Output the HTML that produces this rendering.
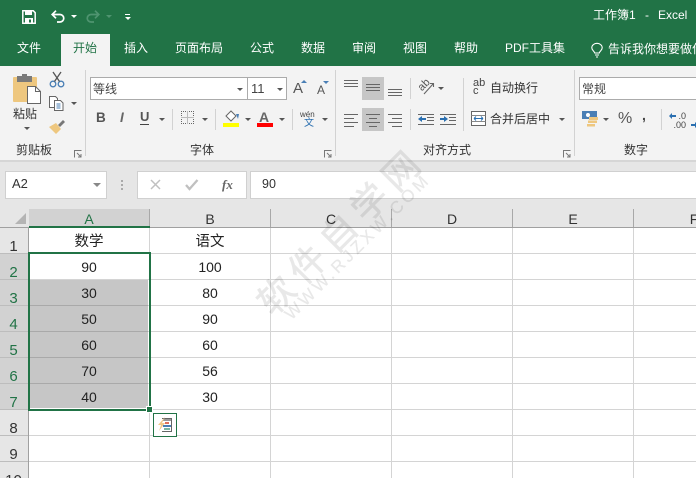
<!DOCTYPE html>
<html><head><meta charset="utf-8"><style>
*{box-sizing:border-box}
html,body{margin:0;padding:0;width:696px;height:478px;overflow:hidden}
body{position:relative;background:#fff;font-family:"Liberation Sans","Noto Sans CJK SC",sans-serif;font-size:12px;color:#222}
#r{position:absolute;left:0;top:0;width:696px;height:478px;overflow:hidden;background:#fff}
.a{position:absolute;white-space:nowrap}
.tab{position:absolute;top:39px;color:#fff;font-size:12px;line-height:18px;white-space:nowrap}
.lbl{position:absolute;top:141px;font-size:12px;line-height:18px;color:#333;white-space:nowrap}
.sep{position:absolute;background:#d2d2d2;width:1px}
.tri{position:absolute;width:0;height:0;border-left:3px solid transparent;border-right:3px solid transparent;border-top:3px solid #555}
.hl{position:absolute;left:29px;width:667px;height:1px;background:#d4d4d4}
.vl{position:absolute;top:228px;width:1px;height:250px;background:#d4d4d4}
.rh{position:absolute;left:0;width:27px;text-align:center;font-size:15px;line-height:18px;color:#333}
.ch{position:absolute;top:209px;height:18px;text-align:center;font-size:14px;line-height:20px;color:#333;border-right:1px solid #a8a8a8}
.c{position:absolute;width:120px;text-align:center;font-size:14px;line-height:18px;color:#222}
.z{font-size:14.5px}
.g{background:#c6c6c6}
.ic{position:absolute;overflow:visible}
</style></head><body><div id="r">
<!-- title bar -->
<div class="a" style="left:0;top:0;width:696px;height:66px;background:#217346"></div>
<svg class="ic" style="left:22px;top:10px" width="14" height="14" viewBox="0 0 14 14"><path d="M.8.8h10.500l1.900 1.900v10.500H.8z" fill="none" stroke="#fff" stroke-width="1.500"/><rect x="3" y="1" width="7" height="4" fill="#fff"/><rect x="3" y="8" width="8" height="5" fill="#fff"/><rect x="7" y="9.500" width="2" height="3" fill="#217346"/></svg>
<svg class="ic" style="left:51px;top:10px" width="14" height="13" viewBox="0 0 14 13"><path d="M5 .7L1.200 4.500 5 8.300M1.500 4.500h7.500a3.600 3.600 0 0 1 0 7.500H6" fill="none" stroke="#fff" stroke-width="1.700"/></svg>
<div class="tri" style="left:71px;top:15px;border-top-color:#fff"></div>
<svg class="ic" style="left:86px;top:10px" width="14" height="13" viewBox="0 0 14 13"><path d="M9 .7l3.800 3.800L9 8.300M12.500 4.500H5a3.600 3.600 0 0 0 0 7.500h3" fill="none" stroke="#4f9470" stroke-width="1.700"/></svg>
<div class="tri" style="left:106px;top:15px;border-top-color:#4f9470"></div>
<div class="a" style="left:125px;top:14px;width:5px;height:1px;background:#fff"></div>
<div class="tri" style="left:125px;top:17px;border-top-color:#fff"></div>
<div class="a" style="left:593px;top:6px;color:#fff;font-size:12px;line-height:18px">工作簿1</div>
<div class="a" style="left:645px;top:6px;color:#fff;font-size:12px;line-height:18px">-</div>
<div class="a" style="left:658px;top:6px;color:#fff;font-size:12px;line-height:18px">Excel</div>
<!-- tabs -->
<div class="a" style="left:61px;top:34px;width:49px;height:32px;background:#f3f3f3"></div>
<div class="tab" style="left:17px">文件</div>
<div class="tab" style="left:73px;color:#217346">开始</div>
<div class="tab" style="left:124px">插入</div>
<div class="tab" style="left:175px">页面布局</div>
<div class="tab" style="left:250px">公式</div>
<div class="tab" style="left:301px">数据</div>
<div class="tab" style="left:352px">审阅</div>
<div class="tab" style="left:403px">视图</div>
<div class="tab" style="left:454px">帮助</div>
<div class="tab" style="left:505px">PDF工具集</div>
<svg class="ic" style="left:591px;top:43px" width="12" height="15" viewBox="0 0 12 15"><path d="M3.700 10C3.300 8 .8 7.300.8 4.800a5.200 4.500 0 0 1 10.400 0C11.200 7.300 8.700 8 8.300 10zM4 12h4M5 14h2" fill="none" stroke="#fff" stroke-width="1.100"/></svg>
<div class="tab" style="left:608px;top:40px">告诉我你想要做什么</div>
<!-- ribbon -->
<div class="a" style="left:0;top:66px;width:696px;height:95px;background:#f3f3f3"></div>
<div class="a" style="left:0;top:160px;width:696px;height:2px;background:#d6d6d6"></div>
<div class="a" style="left:0;top:162px;width:696px;height:47px;background:#e6e6e6"></div>
<div class="sep" style="left:85px;top:70px;height:86px"></div>
<div class="sep" style="left:335px;top:70px;height:86px"></div>
<div class="sep" style="left:574px;top:70px;height:86px"></div>
<!-- clipboard -->
<svg class="ic" style="left:13px;top:74px" width="29" height="31" viewBox="0 0 29 31"><rect x="0" y="3" width="24" height="25" rx="1" fill="#eec77f"/><rect x="4" y="2" width="15" height="6" fill="#7a7a7a"/><rect x="9" y="0" width="5" height="3" fill="#7a7a7a"/><path d="M14.500 12.500h8l5 5v12h-13z" fill="#fff" stroke="#666"/><path d="M22.500 12.500v5h5" fill="none" stroke="#666"/></svg>
<svg class="ic" style="left:49px;top:71px" width="16" height="17" viewBox="0 0 16 17"><circle cx="4" cy="13" r="2.800" fill="none" stroke="#4a7fb5" stroke-width="1.300"/><circle cx="12" cy="13" r="2.800" fill="none" stroke="#4a7fb5" stroke-width="1.300"/><path d="M5.500 10.500L12 1M10.500 10.500L4 1" stroke="#555" stroke-width="1.300"/></svg>
<svg class="ic" style="left:49px;top:96px" width="15" height="15" viewBox="0 0 15 15"><path d="M.5.5h6l2 2v9H.500z" fill="#fff" stroke="#666"/><path d="M5.500 4.500h6l2.500 2.500v7.500H5.500z" fill="#fff" stroke="#666"/><path d="M7.500 8h4M7.500 10h4M7.500 12h4" stroke="#4a7fb5"/></svg>
<div class="tri" style="left:71px;top:102px"></div>
<svg class="ic" style="left:49px;top:119px" width="17" height="15" viewBox="0 0 17 15"><path d="M0 8l7-4 5 6-5 5z" fill="#eec77f"/><path d="M9 6l5-5 2 2-5 5z" fill="#777"/></svg>
<div class="a" style="left:13px;top:105px;font-size:12px;line-height:18px;color:#333">粘贴</div>
<div class="tri" style="left:24px;top:127px"></div>
<div class="lbl" style="left:16px">剪贴板</div>
<div class="lbl" style="left:190px">字体</div>
<div class="lbl" style="left:423px">对齐方式</div>
<div class="lbl" style="left:624px">数字</div>
<svg class="ic" style="left:74px;top:150px" width="8" height="8"><path d="M.5 7.500v-7h7M3 3l4 4M7 4v3H4" fill="none" stroke="#777"/></svg>
<svg class="ic" style="left:324px;top:150px" width="8" height="8"><path d="M.5 7.500v-7h7M3 3l4 4M7 4v3H4" fill="none" stroke="#777"/></svg>
<svg class="ic" style="left:563px;top:150px" width="8" height="8"><path d="M.5 7.500v-7h7M3 3l4 4M7 4v3H4" fill="none" stroke="#777"/></svg>
<!-- font -->
<div class="a" style="left:90px;top:77px;width:197px;height:23px;background:#fff;border:1px solid #ababab"></div>
<div class="a" style="left:247px;top:77px;width:1px;height:23px;background:#ababab"></div>
<div class="a" style="left:93px;top:80px;line-height:18px;color:#444">等线</div>
<div class="tri" style="left:237px;top:88px"></div>
<div class="a" style="left:251px;top:80px;font-size:13px;line-height:18px;color:#444">11</div>
<div class="tri" style="left:277px;top:88px"></div>
<div class="a" style="left:293px;top:80px;font-size:15px;line-height:18px;color:#555">A</div>
<div class="tri" style="left:301px;top:80px;border-top:0;border-bottom:3px solid #4a7fb5"></div>
<div class="a" style="left:317px;top:82px;font-size:12px;line-height:16px;color:#555">A</div>
<div class="tri" style="left:323px;top:81px;border-top-color:#4a7fb5"></div>
<div class="a" style="left:96px;top:109px;font-size:13.500px;font-weight:bold;line-height:18px;color:#555">B</div>
<div class="a" style="left:120px;top:109px;font-style:italic;font-size:13.500px;font-weight:bold;line-height:18px;color:#666">I</div>
<div class="a" style="left:140px;top:109px;font-size:13px;font-weight:bold;line-height:16px;color:#555">U</div>
<div class="a" style="left:140px;top:124px;width:9px;height:1px;background:#444"></div>
<div class="tri" style="left:159px;top:118px"></div>
<div class="sep" style="left:172px;top:109px;height:21px"></div>
<div class="a" style="left:181px;top:111px;width:13px;height:13px;border:1px dotted #666"></div>
<div class="a" style="left:187px;top:111px;width:1px;height:13px;background:#bbb"></div>
<div class="a" style="left:181px;top:117px;width:13px;height:1px;background:#bbb"></div>
<div class="tri" style="left:202px;top:118px"></div>
<div class="sep" style="left:215px;top:109px;height:21px"></div>
<svg class="ic" style="left:225px;top:110px" width="15" height="13" viewBox="0 0 15 13"><path d="M1 6l5-5 5 5-5 5z" fill="#fff" stroke="#666"/><path d="M11 4h3l-1 5z" fill="#4a7fb5"/></svg>
<div class="a" style="left:223px;top:123px;width:16px;height:4px;background:#ff0"></div>
<div class="tri" style="left:245px;top:118px"></div>
<div class="a" style="left:259px;top:110px;font-size:14px;font-weight:bold;line-height:15px;color:#666">A</div>
<div class="a" style="left:257px;top:123px;width:16px;height:4px;background:#f00"></div>
<div class="tri" style="left:279px;top:118px"></div>
<div class="sep" style="left:292px;top:109px;height:21px"></div>
<div class="a" style="left:300px;top:110px;font-size:8px;line-height:10px;color:#444">wén</div>
<div class="a" style="left:304px;top:118px;font-size:10px;line-height:11px;color:#2a6fb0">文</div>
<div class="tri" style="left:322px;top:118px"></div>
<!-- align -->
<div class="a" style="left:362px;top:77px;width:22px;height:23px;background:#c6c6c6"></div>
<div class="a" style="left:362px;top:108px;width:22px;height:23px;background:#c6c6c6"></div>
<svg class="ic" style="left:340px;top:76px" width="70" height="60" viewBox="0 0 70 60" stroke="#666" fill="none"><path d="M4 4.500h14M4 7.500h14M4 10.500h14M26 8.500h14M26 11.500h14M26 14.500h14M48 13.500h14M48 16.500h14M48 19.500h14"/><path d="M4 38.500h14M4 42.500h10M4 46.500h14M4 50.500h10M26 38.500h14M29 42.500h8M26 46.500h14M29 50.500h8M48 38.500h14M52 42.500h10M48 46.500h14M52 50.500h10"/></svg>
<div class="sep" style="left:410px;top:78px;height:21px"></div>
<div class="sep" style="left:410px;top:109px;height:21px"></div>
<div class="a" style="left:418px;top:79px;font-size:11px;line-height:12px;color:#555;transform:rotate(-45deg)">ab</div>
<svg class="ic" style="left:418px;top:80px" width="17" height="15" viewBox="0 0 17 15"><path d="M6 14L15 4M12 3.500h3.500v3.500" fill="none" stroke="#666" stroke-width="1.100"/></svg>
<div class="tri" style="left:438px;top:87px"></div>
<svg class="ic" style="left:418px;top:114px" width="40" height="12" viewBox="0 0 40 12"><path d="M0 .5h16M9 3.500h7M9 6.500h7M0 10.500h16M22 .5h16M31 3.500h7M31 6.500h7M22 10.500h16" stroke="#666" fill="none"/><path d="M0 5l4-3v2h4v2H4v2zM30 5l-4-3v2h-4v2h4v2z" fill="#2a6fb0"/></svg>
<div class="sep" style="left:463px;top:78px;height:53px"></div>
<div class="a" style="left:473px;top:79px;font-size:11px;line-height:8px;color:#444;white-space:normal;width:14px">ab<br>c</div>
<div class="a" style="left:490px;top:79px;line-height:18px;color:#333">自动换行</div>
<svg class="ic" style="left:471px;top:111px" width="15" height="15" viewBox="0 0 15 15"><rect x=".5" y=".5" width="14" height="14" fill="#fff" stroke="#666"/><path d="M.5 4.500h14M.5 10.500h14" stroke="#888"/><path d="M3 7.500h9M3 7.500l2-2M3 7.500l2 2M12 7.500l-2-2M12 7.500l-2 2" stroke="#2a6fb0" fill="none"/></svg>
<div class="a" style="left:490px;top:110px;line-height:18px;color:#333">合并后居中</div>
<div class="tri" style="left:559px;top:118px"></div>
<!-- number -->
<div class="a" style="left:579px;top:77px;width:130px;height:23px;background:#fff;border:1px solid #ababab"></div>
<div class="a" style="left:582px;top:80px;line-height:18px;color:#444">常规</div>
<svg class="ic" style="left:582px;top:111px" width="17" height="16" viewBox="0 0 17 16"><rect x="0" y="0" width="15" height="8" fill="#4a7fb5"/><circle cx="6" cy="4" r="2" fill="#fff"/><rect x="7" y="6" width="9" height="3" fill="#eec77f"/><rect x="6" y="9.500" width="9" height="2.500" fill="#eec77f"/><rect x="5" y="13" width="8" height="2.500" fill="#eec77f"/></svg>
<div class="tri" style="left:603px;top:118px"></div>
<div class="a" style="left:618px;top:110px;font-size:16px;line-height:18px;color:#555">%</div>
<div class="a" style="left:642px;top:106px;font-size:14px;font-weight:bold;line-height:18px;color:#444">,</div>
<div class="sep" style="left:661px;top:109px;height:21px"></div>
<div class="a" style="left:671px;top:112px;font-size:9px;line-height:9px;color:#444;text-align:right;width:15px;white-space:normal">.0<br>.00</div>
<svg class="ic" style="left:669px;top:113px" width="7" height="6"><path d="M0 3l3-3v2h4v2H3v2z" fill="#2a6fb0"/></svg>
<svg class="ic" style="left:691px;top:122px" width="7" height="6"><path d="M0 2h4V0l3 3-3 3V4H0z" fill="#2a6fb0"/></svg>
<!-- formula bar -->
<div class="a" style="left:5px;top:171px;width:102px;height:28px;background:#fff;border:1px solid #d0d0d0"></div>
<div class="a" style="left:12px;top:175px;font-size:13px;line-height:18px;color:#333">A2</div>
<div class="tri" style="left:93px;top:183px;border-left-width:4px;border-right-width:4px;border-top:4px solid #888"></div>
<div class="a" style="left:121px;top:180px;width:2px;height:2px;background:#aaa"></div>
<div class="a" style="left:121px;top:184px;width:2px;height:2px;background:#aaa"></div>
<div class="a" style="left:121px;top:188px;width:2px;height:2px;background:#aaa"></div>
<div class="a" style="left:137px;top:171px;width:110px;height:28px;background:#fff;border:1px solid #d0d0d0"></div>
<svg class="ic" style="left:150px;top:179px" width="50" height="12" viewBox="0 0 50 12"><path d="M1 1l9 9M10 1l-9 9" stroke="#c0c0c0" stroke-width="1.500" fill="none"/><path d="M36 6l3.500 4 8-9" stroke="#c0c0c0" stroke-width="2.300" fill="none"/></svg>
<div class="a" style="left:222px;top:176px;font-family:'Liberation Serif',serif;font-style:italic;font-weight:bold;font-size:13px;line-height:18px;color:#666">fx</div>
<div class="a" style="left:250px;top:171px;width:446px;height:28px;background:#fff;border:1px solid #d0d0d0;border-right:0"></div>
<div class="a" style="left:262px;top:175px;font-size:12.500px;line-height:18px;color:#333">90</div>
<!-- grid headers -->
<div class="a" style="left:0;top:209px;width:696px;height:18px;background:#e6e6e6"></div>
<div class="a" style="left:0;top:227px;width:28px;height:251px;background:#e6e6e6"></div>
<div class="a" style="left:15px;top:213px;width:0;height:0;border-left:11px solid transparent;border-bottom:11px solid #b4b4b4"></div>
<div class="ch" style="left:29px;width:121px;background:#d2d2d2;color:#217346">A</div>
<div class="ch" style="left:150px;width:121px">B</div>
<div class="ch" style="left:271px;width:121px">C</div>
<div class="ch" style="left:392px;width:121px">D</div>
<div class="ch" style="left:513px;width:121px">E</div>
<div class="ch" style="left:634px;width:121px">F</div>
<div class="a" style="left:0;top:227px;width:696px;height:1px;background:#a0a0a0"></div>
<div class="a" style="left:29px;top:226px;width:121px;height:2px;background:#217346"></div>
<div class="a" style="left:28px;top:228px;width:1px;height:250px;background:#a0a0a0"></div>
<div class="a" style="left:0;top:254px;width:28px;height:156px;background:#d2d2d2"></div>
<!-- row header numbers -->
<div class="rh" style="top:238px">1</div>
<div class="rh" style="top:264px;color:#217346">2</div>
<div class="rh" style="top:290px;color:#217346">3</div>
<div class="rh" style="top:316px;color:#217346">4</div>
<div class="rh" style="top:342px;color:#217346">5</div>
<div class="rh" style="top:368px;color:#217346">6</div>
<div class="rh" style="top:394px;color:#217346">7</div>
<div class="rh" style="top:420px">8</div>
<div class="rh" style="top:446px">9</div>
<div class="rh" style="top:472px">10</div>
<div class="a" style="left:0;top:253px;width:28px;height:1px;background:#bdbdbd"></div>
<div class="a" style="left:0;top:279px;width:28px;height:1px;background:#bdbdbd"></div>
<div class="a" style="left:0;top:305px;width:28px;height:1px;background:#bdbdbd"></div>
<div class="a" style="left:0;top:331px;width:28px;height:1px;background:#bdbdbd"></div>
<div class="a" style="left:0;top:357px;width:28px;height:1px;background:#bdbdbd"></div>
<div class="a" style="left:0;top:383px;width:28px;height:1px;background:#bdbdbd"></div>
<div class="a" style="left:0;top:409px;width:28px;height:1px;background:#bdbdbd"></div>
<div class="a" style="left:0;top:435px;width:28px;height:1px;background:#bdbdbd"></div>
<div class="a" style="left:0;top:461px;width:28px;height:1px;background:#bdbdbd"></div>
<!-- grid lines -->
<div class="hl" style="top:253px"></div><div class="hl" style="top:279px"></div><div class="hl" style="top:305px"></div><div class="hl" style="top:331px"></div><div class="hl" style="top:357px"></div><div class="hl" style="top:383px"></div><div class="hl" style="top:409px"></div><div class="hl" style="top:435px"></div><div class="hl" style="top:461px"></div>
<div class="vl" style="left:149px"></div><div class="vl" style="left:270px"></div><div class="vl" style="left:391px"></div><div class="vl" style="left:512px"></div><div class="vl" style="left:633px"></div>
<!-- selection fill -->
<div class="a g" style="left:30px;top:280px;width:118px;height:128px"></div>
<div class="a" style="left:30px;top:305px;width:118px;height:1px;background:#a9a9a9"></div>
<div class="a" style="left:30px;top:331px;width:118px;height:1px;background:#a9a9a9"></div>
<div class="a" style="left:30px;top:357px;width:118px;height:1px;background:#a9a9a9"></div>
<div class="a" style="left:30px;top:383px;width:118px;height:1px;background:#a9a9a9"></div>
<!-- cells -->
<div class="c z" style="left:29px;top:233px">数学</div><div class="c z" style="left:150px;top:233px">语文</div>
<div class="c" style="left:29px;top:258px">90</div><div class="c" style="left:150px;top:258px">100</div>
<div class="c" style="left:29px;top:284px">30</div><div class="c" style="left:150px;top:284px">80</div>
<div class="c" style="left:29px;top:310px">50</div><div class="c" style="left:150px;top:310px">90</div>
<div class="c" style="left:29px;top:336px">60</div><div class="c" style="left:150px;top:336px">60</div>
<div class="c" style="left:29px;top:362px">70</div><div class="c" style="left:150px;top:362px">56</div>
<div class="c" style="left:29px;top:388px">40</div><div class="c" style="left:150px;top:388px">30</div>
<!-- selection border -->
<div class="a" style="left:28px;top:252px;width:123px;height:159px;border:2px solid #217346"></div>
<div class="a" style="left:146px;top:406px;width:7px;height:7px;background:#217346;border:1px solid #fff"></div>
<!-- quick analysis -->
<div class="a" style="left:153px;top:413px;width:24px;height:24px;background:#fff;border:1px solid #217346"></div>
<svg class="ic" style="left:157px;top:417px" width="16" height="16" viewBox="0 0 16 16"><path d="M5 1.500h9.500v13H5" fill="#fff" stroke="#666"/><rect x="6" y="2" width="8" height="2" fill="#999"/><path d="M8 0L1 8h3L2 14l6-8H5z" fill="#f0c98a"/><rect x="8" y="5" width="4" height="2" fill="#e0705a"/><rect x="6" y="8" width="8" height="2" fill="#4a7fb5"/><rect x="7" y="11" width="6" height="2" fill="#7ab5a0"/></svg>
<!-- watermark -->
<div class="a" style="left:212px;top:211px;width:260px;text-align:center;font-size:36px;letter-spacing:8px;line-height:40px;font-weight:normal;-webkit-text-stroke:.7px #000;color:#000;opacity:.085;transform:rotate(-45deg);transform-origin:center">软件自学网</div>
<div class="a" style="left:238px;top:237px;width:240px;text-align:center;font-size:17px;line-height:20px;-webkit-text-stroke:.3px #000;color:#000;opacity:.085;letter-spacing:3.400px;transform:rotate(-45deg);transform-origin:center">WWW.RJZXW.COM</div>
</div></body></html>
